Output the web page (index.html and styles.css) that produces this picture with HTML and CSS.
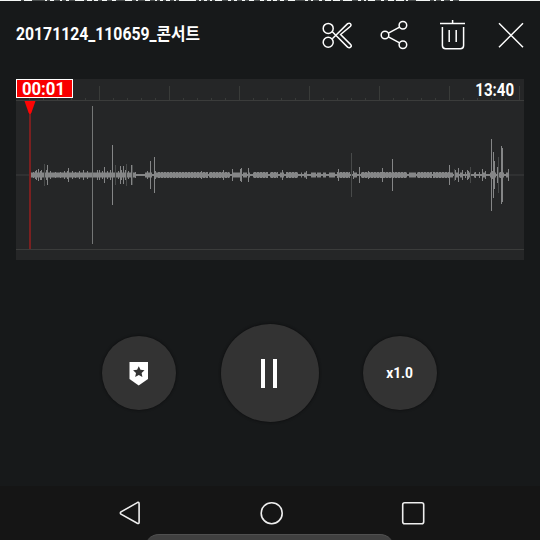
FILE: index.html
```
<!DOCTYPE html>
<html lang="ko">
<head>
<meta charset="utf-8">
<title>20171124_110659_콘서트</title>
<link rel="stylesheet" href="styles.css">
</head>
<body>
<div class="screen">
  <svg class="edge" viewBox="0 0 540 2" aria-hidden="true">
    <path class="edge-light" d="M0 .5H540"/>
    <path class="edge-dark" d="M21 .5h3M32 .5h13M47 .5h3M54 .5h6M62 .5h4M69 .5h6M84 .5h3M92 .5h2M98 .5h4M107 .5h5M116 .5h9M132 .5h4M138 .5h7M150 .5h5M157 .5h3M163 .5h3M170 .5h4M176 .5h3M196 .5h3M201 .5h3M207 .5h3M212 .5h3M222 .5h6M231 .5h3M237 .5h5M245 .5h4M254 .5h6M264 .5h3M271 .5h2M277 .5h3M284 .5h4M295 .5h10M308 .5h3M313 .5h6M322 .5h3M331 .5h2M340 .5h3M352 .5h6M361 .5h3M366 .5h2M375 .5h6M384 .5h4M394 .5h2M404 .5h2M408 .5h8M430 .5h4M436 .5h5M444 .5h6M453 .5h6"/>
  </svg>
  <header class="topbar">
    <h1 class="title"><span>20171124_110659_콘서트</span></h1>
    <div class="actions">
      <svg class="icon" viewBox="320 18 34 34" role="img" aria-label="자르기">
        <circle cx="328.2" cy="28.4" r="5"/><circle cx="328.2" cy="42.2" r="5"/>
        <path d="M332.3 31.8 347.6 47.1Q349.4 48.3 350.7 47T350.5 44.4L340.6 34.500 350.5 26.2Q351.7 24.8 350.5 23.700T347.6 23.700L332.3 38.7"/>
      </svg>
      <svg class="icon" viewBox="378 18 34 34" role="img" aria-label="공유">
        <circle cx="385" cy="35" r="3.8"/><circle cx="402.9" cy="25.3" r="3.8"/><circle cx="402.9" cy="44.8" r="3.8"/>
        <path d="m388.4 33.2 11.2-6M388.4 36.9l11.2 6"/>
      </svg>
      <svg class="icon" viewBox="436 18 34 34" role="img" aria-label="삭제">
        <path d="M440 23.6H465M452.6 20v3.5M442.4 27V45.5q0 3.2 3.2 3.2H460.4q3.2 0 3.2-3.2V27M449.2 30V42M456.2 30V42"/>
      </svg>
      <svg class="icon" viewBox="494 18 34 34" role="img" aria-label="닫기">
        <path d="m499 23.3 24 24M523 23.3l-24 24"/>
      </svg>
    </div>
  </header>

  <section class="recorder">
    <svg class="wave" viewBox="16 79 508 181" aria-hidden="true">
      <path class="tick" d="M29.5 98v3M43.5 98v3M57.5 98v3M71.5 98v3M85.5 98v3M113.5 98v3M127.5 98v3M141.5 98v3M155.5 98v3M183.5 98v3M197.5 98v3M211.5 98v3M225.5 98v3M253.5 98v3M267.5 98v3M281.5 98v3M295.5 98v3M323.5 98v3M337.5 98v3M351.5 98v3M365.5 98v3M393.5 98v3M407.5 98v3M421.5 98v3M435.5 98v3M463.5 98v3M477.5 98v3M491.5 98v3M505.5 98v3"/>
      <path class="tick" d="M99.5 86v14M169.5 86v14M239.5 86v14M309.5 86v14M379.5 86v14M449.5 86v14M519.5 86v14"/>
      <path class="rule" d="M16 100.5H524M16 249.5H524"/>
      <path class="axis" d="M16 175H524"/>
      <path class="core" d="M30 175H509"/>
      <path class="band" d="M31 175H136M145 175H152M154 175H208M209 175H230M232 175H241M243 175H247M249 175H250M253 175H268M270 175H278M280 175H284M286 175H298M301 175H302M304 175H307M311 175H316M317 175H321M323 175H326M329 175H335M337 175H350M353 175H357M361 175H407M409 175H416M417 175H432M433 175H453M455 175H458M460 175H463M467 175H470M474 175H475M482 175H485M490 175H496M499 175H504M506 175H508"/>
      <path class="grain" d="M158 175H208M210 175H229M254 175H268M271 175H278M286 175H298M337 175H350M362 175H407M418 175H449"/>
      <path class="burst" d="M33.5 172v6M35.5 171v8M36.5 170v10M38.5 169v12M40.5 171v9M41.5 170v10M46.5 170v10M50.5 171v8M55.5 172v6M60.5 172v6M64.5 171v8M67.5 171v8M72.5 171v8M75.5 172v6M79.5 171v8M83.5 170v10M87.5 171v8M92.5 171v8M97.5 170v10M99.5 170v10M102.5 171v8M107.5 171v8M110.5 170v10M115.5 170v10M118.5 171v8M121.5 170v10M125.5 170v10M128.5 171v8M135.5 172v6M147.5 171v8M155.5 171v8M201.5 171v8M282.5 170v9M306.5 171v8M353.5 171v8M368.5 171v8M455.5 170v10M462.5 170v10M465.5 172v6M468.5 171v8M475.5 172v6M479.5 172v6M485.5 171v8M492.5 171v8M500.5 172v6"/>
      <path class="faint" d="M44.5 164v22M115.5 165v20M126.5 164v22M132.5 165v20M351.5 153v44M454.5 169v12M470.5 167v16M498.5 157v36"/>
      <path class="peak" d="M47.5 165v20M68.5 168v14M104.5 167v16M112.5 145v60M120.5 166v18M123.5 166v18M131.5 165v20M150.5 161v28M154.5 157v36M223.5 170v10M232.5 169v12M240.5 169v12M241.5 168v14M248.5 168v14M282.5 170v10M306.5 171v8M338.5 169v12M359.5 167v16M382.5 168v14M392.5 159v32M449.5 165v20M458.5 168v14M467.5 170v10M482.5 169v12M491.5 139v72M493.5 152v46M494.5 161v28M497.5 167v16M501.5 146v58M502.5 148v54M508.5 169v12"/>
      <path class="tall" d="M92.5 106V244"/>
      <path class="playline" d="M30 110V249"/>
      <path class="playhead" d="M24.5 101H35.5L31.5 112.5Q30 115.5 28.5 112.5Z"/>
    </svg>
    <div class="times">
      <div class="elapsed"><span>00:01</span></div>
      <div class="total"><span>13:40</span></div>
    </div>
  </section>

  <section class="controls">
    <button class="round" aria-label="북마크">
      <svg class="bookmark" viewBox="0 0 20 25"><path fill="#fff" d="M.5 1H19V18L9.7 24.5.5 18Z"/><path fill="#333" d="m9.8 5.2 1.7 3.6 4 .5-2.9 2.8.8 4-3.6-2-3.6 2 .8-4-2.9-2.8 4-.5Z"/></svg>
    </button>
    <button class="round round-main" aria-label="일시정지"><i class="bar"></i><i class="bar"></i></button>
    <button class="round"><span class="speed">x1.0</span></button>
  </section>

  <nav class="navbar">
    <svg class="nav-icon" viewBox="0 0 24 24"><path d="M19.3 1.6Q21.1.8 21.1 2.7V21.2Q21.1 23.1 19.3 22.3L3 13.1Q1.7 12 3 10.9Z"/></svg>
    <svg class="nav-icon" viewBox="0 0 24 24"><circle cx="11.7" cy="12.2" r="10.5"/></svg>
    <svg class="nav-icon" viewBox="0 0 24 24"><rect x="1.7" y="1.7" width="21" height="21" rx="2"/></svg>
    <div class="sheet"></div>
  </nav>
</div>
</body>
</html>
```

FILE: styles.css
```
* { box-sizing: border-box; }
body { margin: 0; background: #17191a; color: #fff; font-family: Roboto, "Noto Sans CJK KR", sans-serif; }
.screen { width: 540px; height: 540px; display: flex; flex-direction: column; overflow: hidden; background: #17191a; }
.edge { display: block; width: 540px; height: 2px; flex: none; }
.edge path { fill: none; stroke-width: 1; }
.edge .edge-light { stroke: #f4f7f6; }
.edge .edge-dark { stroke: #484c4c; }
.topbar { height: 77px; flex: none; display: flex; justify-content: space-between; padding: 16px 12px 0 16px; }
.title { margin: 4px 0 0; width: 190px; font-size: 17.5px; line-height: 25px; font-weight: 700; white-space: nowrap; }
.title span { display: inline-block; transform: scaleX(.9); transform-origin: left; }
.actions { display: flex; gap: 24px; }
.icon { width: 34px; height: 34px; fill: none; stroke: #fff; stroke-width: 1.5; }
.recorder { position: relative; width: 508px; height: 181px; flex: none; margin: 0 16px; background: #252627; }
.wave { display: block; width: 508px; height: 181px; }
.wave path { fill: none; stroke-width: 1; }
.wave .tick { stroke: #393b39; }
.wave .rule { stroke: #3b3c3b; }
.wave .axis { stroke: #303132; stroke-width: 2; }
.wave .core { stroke: #858687; stroke-width: 2; }
.wave .band { stroke: #858687; stroke-width: 5; }
.wave .grain { stroke: #858687; stroke-width: 6; stroke-dasharray: 2 1; }
.wave .burst { stroke: #858687; }
.wave .faint { stroke: #484a4a; }
.wave .peak { stroke: #858687; }
.wave .tall { stroke: #747676; }
.wave .playline { stroke: #7a2020; stroke-width: 2; }
.wave .playhead { fill: #ff0505; }
.times { position: absolute; top: 0; left: 0; width: 100%; display: flex; justify-content: space-between; }
.elapsed { width: 57px; height: 19px; border: 1px solid #fff; background: #f80000; text-align: center; font-size: 19px; line-height: 17px; font-weight: 700; }
.elapsed span { display: inline-block; transform: translateX(-1px) scaleX(.88); }
.total { margin-right: 10px; font-size: 17.5px; line-height: 22px; font-weight: 700; }
.total span { display: inline-block; transform: scaleX(.86); transform-origin: right; }
.controls { height: 226px; flex: none; display: flex; justify-content: center; align-items: center; gap: 44.5px; padding-right: 1px; }
.round { width: 74px; height: 74px; padding: 0; border: 0; border-radius: 50%; background: #333; color: #fff; box-shadow: 0 0 2px 1px #111213; display: flex; align-items: center; justify-content: center; font-family: inherit; }
.round-main { width: 98px; height: 98px; gap: 8px; padding-right: 2px; }
.bar { width: 4px; height: 29px; background: #fff; }
.bookmark { width: 20px; height: 25px; margin-top: 1px; }
.speed { font-size: 15px; font-weight: 700; transform: scaleX(.92); }
.navbar { position: relative; height: 54px; flex: none; display: flex; justify-content: space-between; padding: 15px 115px 0 118px; background: #151515; }
.nav-icon { width: 24px; height: 24px; fill: none; stroke: #eee; stroke-width: 1.6; }
.sheet { position: absolute; top: 48px; left: 145px; width: 249px; height: 28px; border-radius: 14px; background: #404040; border-top: 1px solid #505050; }
```
